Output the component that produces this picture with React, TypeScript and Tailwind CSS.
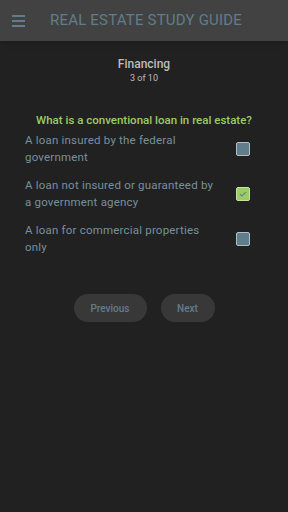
import { useState } from "react";

const OPTIONS = [
  "A loan insured by the federal government",
  "A loan not insured or guaranteed by a government agency",
  "A loan for commercial properties only",
];

export default function App() {
  const [picked, setPicked] = useState(1);

  return (
    <div className="flex h-[512px] w-[288px] flex-col bg-[#212121] font-['Roboto',sans-serif]">
      <header className="flex h-[41px] items-center bg-[#424242] shadow-md">
        <div className="ml-3 flex w-[13px] flex-col gap-[3px]">
          <span className="h-[2px] bg-[#607d8b]" />
          <span className="h-[2px] bg-[#607d8b]" />
          <span className="h-[2px] bg-[#607d8b]" />
        </div>
        <h1 className="ml-[25px] text-[15px] tracking-[0.2px] text-[#607d8b]">
          REAL ESTATE STUDY GUIDE
        </h1>
      </header>

      <div className="mt-[15px] flex flex-col items-center">
        <p className="text-[12px] font-medium leading-[16px] text-[#bdbdbd]">Financing</p>
        <p className="text-[9px] leading-[12px] text-[#bdbdbd]">3 of 10</p>
      </div>

      <p className="mt-[29px] text-center text-[11.5px] font-medium leading-[14px] text-[#9ccc65]">
        What is a conventional loan in real estate?
      </p>

      <ul className="mt-[5px] flex flex-col gap-[11px] pl-[25px] pr-[38px]">
        {OPTIONS.map((o, i) => (
          <li
            key={i}
            className="flex items-center justify-between"
            onClick={() => setPicked(i)}
          >
            <span className="w-[193px] text-[11.5px] leading-[17px] tracking-[0.2px] text-[#78909c]">
              {o}
            </span>
            {i === picked ? (
              <span className="flex h-[14px] w-[14px] items-center justify-center rounded-[2px] border border-[#c5e1a5] bg-[#9ccc65]">
                <svg viewBox="0 0 24 24" className="h-[10px] w-[10px]" fill="none" stroke="#607d8b" strokeWidth="2.5">
                  <path d="M5 12.5l4.5 4.5L19 7.5" />
                </svg>
              </span>
            ) : (
              <span className="h-[14px] w-[14px] rounded-[2px] border border-[#b0bec5] bg-[#607d8b]" />
            )}
          </li>
        ))}
      </ul>

      <div className="mt-[38px] flex justify-center gap-[14px]">
        <button className="h-[28px] w-[73px] rounded-full bg-[#383838] text-[10px] font-medium text-[#607d8b]">
          Previous
        </button>
        <button className="h-[28px] w-[54px] rounded-full bg-[#383838] text-[10px] font-medium text-[#607d8b]">
          Next
        </button>
      </div>
    </div>
  );
}
